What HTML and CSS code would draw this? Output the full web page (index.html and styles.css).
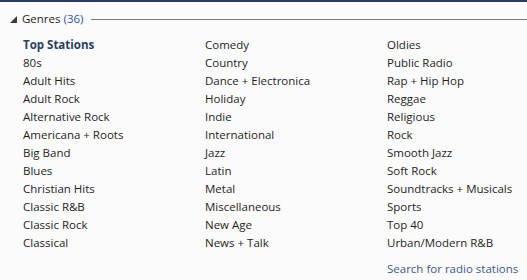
FILE: index.html
```html
<!DOCTYPE html>
<html>
<head>
  <title>Genres</title>
  <link rel="stylesheet" href="styles.css">
</head>
<body>
<div class="top-bar"></div>
<div class="genres-panel">
  <div class="section-header">
    <svg class="expander" width="8" height="8" viewBox="0 0 8 8"><polygon points="7,0 7,7 0,7" fill="#3a3a3a"/></svg>
    <span class="section-title">Genres <span class="count">(36)</span></span>
    <span class="rule"></span>
  </div>

  <div class="genre-grid">
    <ul class="genre-column">
      <li class="genre top">Top Stations</li>
      <li class="genre">80s</li>
      <li class="genre">Adult Hits</li>
      <li class="genre">Adult Rock</li>
      <li class="genre">Alternative Rock</li>
      <li class="genre">Americana + Roots</li>
      <li class="genre">Big Band</li>
      <li class="genre">Blues</li>
      <li class="genre">Christian Hits</li>
      <li class="genre">Classic R&amp;B</li>
      <li class="genre">Classic Rock</li>
      <li class="genre">Classical</li>
    </ul>
    <ul class="genre-column">
      <li class="genre">Comedy</li>
      <li class="genre">Country</li>
      <li class="genre">Dance + Electronica</li>
      <li class="genre">Holiday</li>
      <li class="genre">Indie</li>
      <li class="genre">International</li>
      <li class="genre">Jazz</li>
      <li class="genre">Latin</li>
      <li class="genre">Metal</li>
      <li class="genre">Miscellaneous</li>
      <li class="genre">New Age</li>
      <li class="genre">News + Talk</li>
    </ul>
    <ul class="genre-column">
      <li class="genre">Oldies</li>
      <li class="genre">Public Radio</li>
      <li class="genre">Rap + Hip Hop</li>
      <li class="genre">Reggae</li>
      <li class="genre">Religious</li>
      <li class="genre">Rock</li>
      <li class="genre">Smooth Jazz</li>
      <li class="genre">Soft Rock</li>
      <li class="genre">Soundtracks + Musicals</li>
      <li class="genre">Sports</li>
      <li class="genre">Top 40</li>
      <li class="genre">Urban/Modern R&amp;B</li>
      <li class="search-link">Search for radio stations</li>
    </ul>
  </div>
</div>
</body>
</html>
```

FILE: styles.css
```css
html, body {
  margin: 0;
  padding: 0;
  width: 100%;
  height: 100%;
  background-color: #fbfbfb;
  font-family: "Open Sans", "Noto Sans", sans-serif;
  font-size: 11.5px;
  color: #1e1e1e;
}

.top-bar {
  height: 2px;
  background-color: #283a66;
}

.genres-panel {
  padding: 8px 0 0 10px;
}

.section-header {
  display: flex;
  flex-direction: row;
  align-items: center;
  height: 18px;
}

.expander {
  flex: 0 0 8px;
  margin-right: 4px;
  margin-top: 1px;
}

.section-title {
  line-height: 18px;
  white-space: nowrap;
}

.count {
  color: #2b55a0;
}

.rule {
  flex: 1 1 auto;
  height: 1px;
  margin-left: 8px;
  margin-top: 1px;
  background-color: #7a7a7a;
}

.genre-grid {
  display: grid;
  grid-template-columns: 182px 182px 1fr;
  padding: 8px 0 0 13px;
}

.genre-column {
  list-style: none;
  margin: 0;
  padding: 0;
}

.genre {
  line-height: 18px;
  white-space: nowrap;
}

.genre.top {
  font-weight: bold;
  color: #2d3e5c;
}

.search-link {
  margin-top: 8px;
  line-height: 18px;
  color: #3c5a86;
  white-space: nowrap;
}
```
